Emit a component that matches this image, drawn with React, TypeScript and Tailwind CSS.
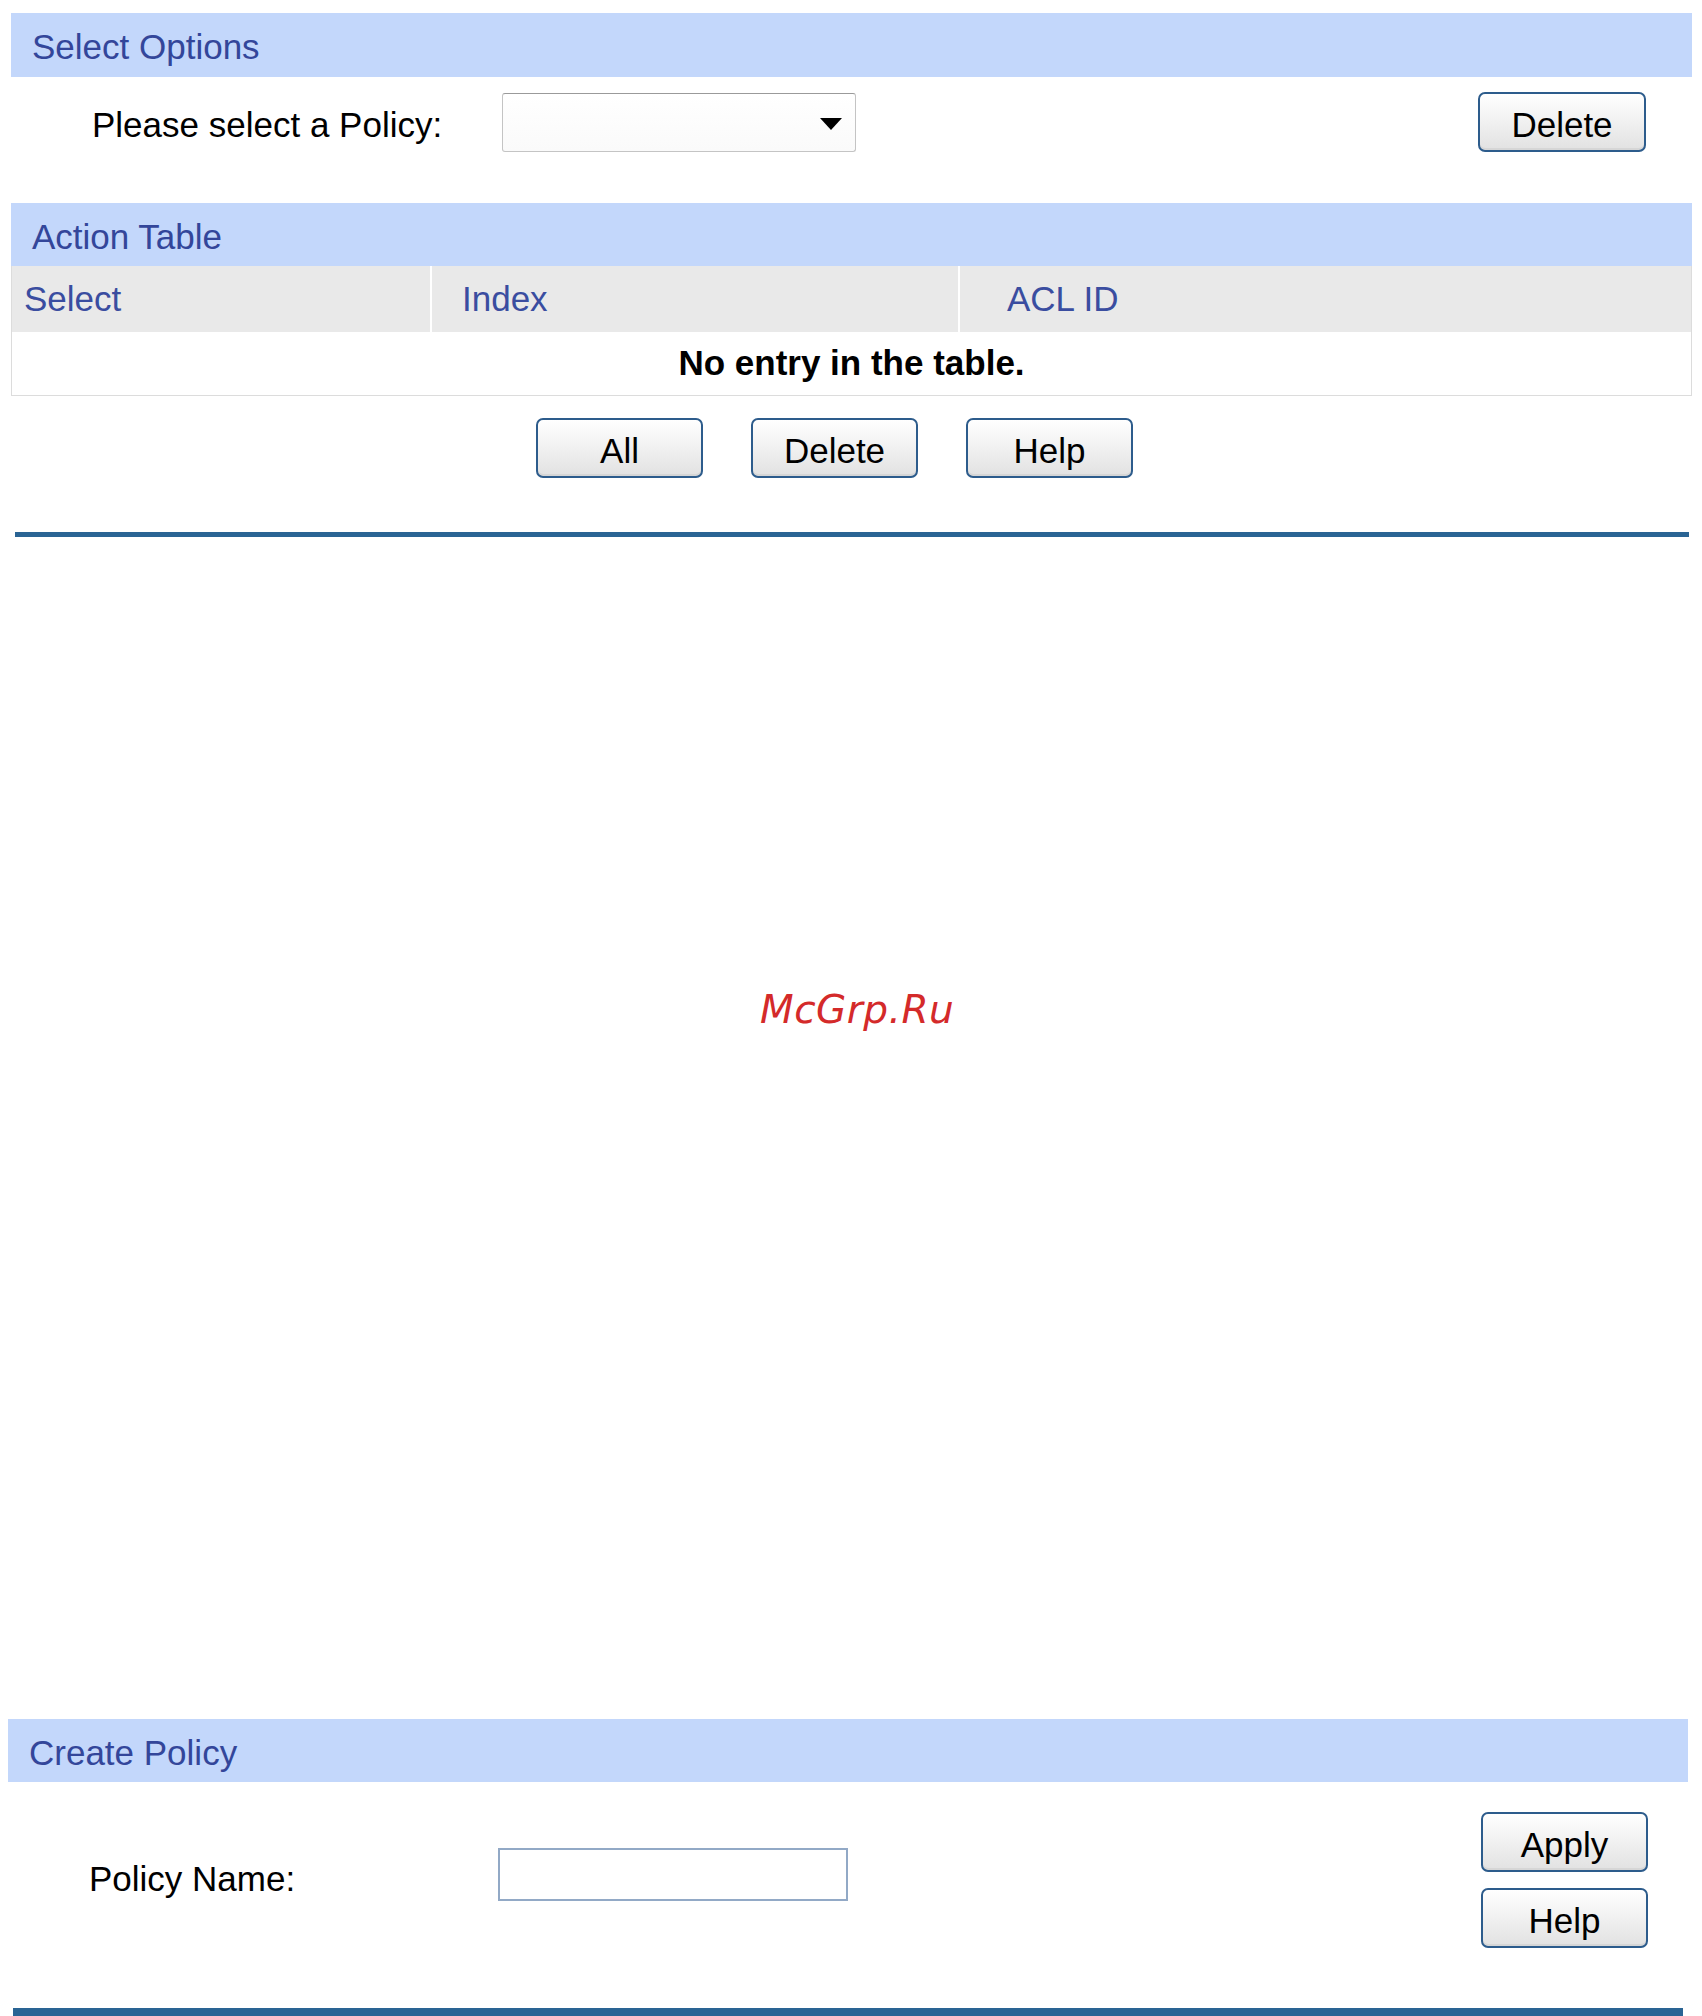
const font = "font-['Liberation_Sans',Arial,sans-serif]";

function Btn({ label, className = "" }: { label: string; className?: string }) {
  return (
    <button
      className={`h-[60px] w-[167px] rounded-[7px] border-2 border-[#2d5c8c] bg-linear-to-b from-white to-[#e2e2e2] pt-[5px] text-[35px] leading-none text-black shadow-[inset_0_-2px_0_#d6d6d6] ${className}`}
    >
      {label}
    </button>
  );
}

function SectionHeader({ title, className = "" }: { title: string; className?: string }) {
  return (
    <div className={`flex h-[63px] items-center bg-[#c3d7fb] pl-[21px] pt-[5px] text-[35px] text-[#33469a] ${className}`}>
      {title}
    </div>
  );
}

export default function App() {
  return (
    <div className={`h-[2016px] w-[1702px] overflow-hidden bg-white ${font}`}>
      {/* Select Options */}
      <SectionHeader title="Select Options" className="mt-[13px] ml-[11px] h-[64px] w-[1681px]" />
      <div className="ml-[11px] mt-[15px] flex h-[60px] w-[1681px] items-center">
        <span className="ml-[81px] w-[410px] pt-[7px] text-[35px] text-black">Please select a Policy:</span>
        <div className="relative h-[59px] w-[354px] rounded-[3px] border border-[#c4c4c4] border-t-[#9a9a9a] bg-linear-to-b from-white to-[#fafafa]">
          <div className="absolute right-[13px] top-[24px] h-0 w-0 border-x-[11px] border-t-[12px] border-x-transparent border-t-black" />
        </div>
        <Btn label="Delete" className="ml-auto mr-[46px] w-[168px]" />
      </div>

      {/* Action Table */}
      <SectionHeader title="Action Table" className="mt-[51px] ml-[11px] w-[1681px]" />
      <div className="ml-[11px] w-[1681px] border-x border-b border-[#dcdcdc]">
        <div className="flex h-[66px] items-center bg-[#e9e9e9] text-[35px] text-[#3a4da0]">
          <div className="flex h-full w-[420px] items-center border-r-2 border-white pl-[12px]">Select</div>
          <div className="flex h-full w-[528px] items-center border-r-2 border-white pl-[30px]">Index</div>
          <div className="flex h-full flex-1 items-center pl-[47px]">ACL ID</div>
        </div>
        <div className="flex h-[63px] items-center justify-center text-[35px] font-bold text-black">
          No entry in the table.
        </div>
      </div>
      <div className="mt-[22px] flex gap-[48px] pl-[536px]">
        <Btn label="All" />
        <Btn label="Delete" />
        <Btn label="Help" />
      </div>
      <div className="ml-[15px] mt-[54px] h-[5px] w-[1674px] bg-[#2a6494]" />

      {/* watermark area */}
      <div className="h-[1182px] pl-[760px] pt-[453px]">
        <div className="h-[39px] font-['DejaVu_Sans',sans-serif] text-[39px] italic leading-[39px] tracking-[0.5px] text-[#d42a2a]">
          McGrp.Ru
        </div>
      </div>

      {/* Create Policy */}
      <SectionHeader title="Create Policy" className="ml-[8px] w-[1680px]" />
      <div className="ml-[8px] flex h-[226px] w-[1680px] items-start pt-[30px]">
        <div className="flex h-[135px] items-center">
          <span className="ml-[81px] w-[409px] text-[35px] text-black">Policy Name:</span>
          <div className="h-[53px] w-[350px] -translate-y-[5px] border-2 border-[#92a9c6] bg-white" />
        </div>
        <div className="ml-auto mr-[40px] flex flex-col gap-[16px]">
          <Btn label="Apply" />
          <Btn label="Help" />
        </div>
      </div>
      <div className="ml-[13px] h-[8px] w-[1670px] bg-[#2a6494]" />
    </div>
  );
}
